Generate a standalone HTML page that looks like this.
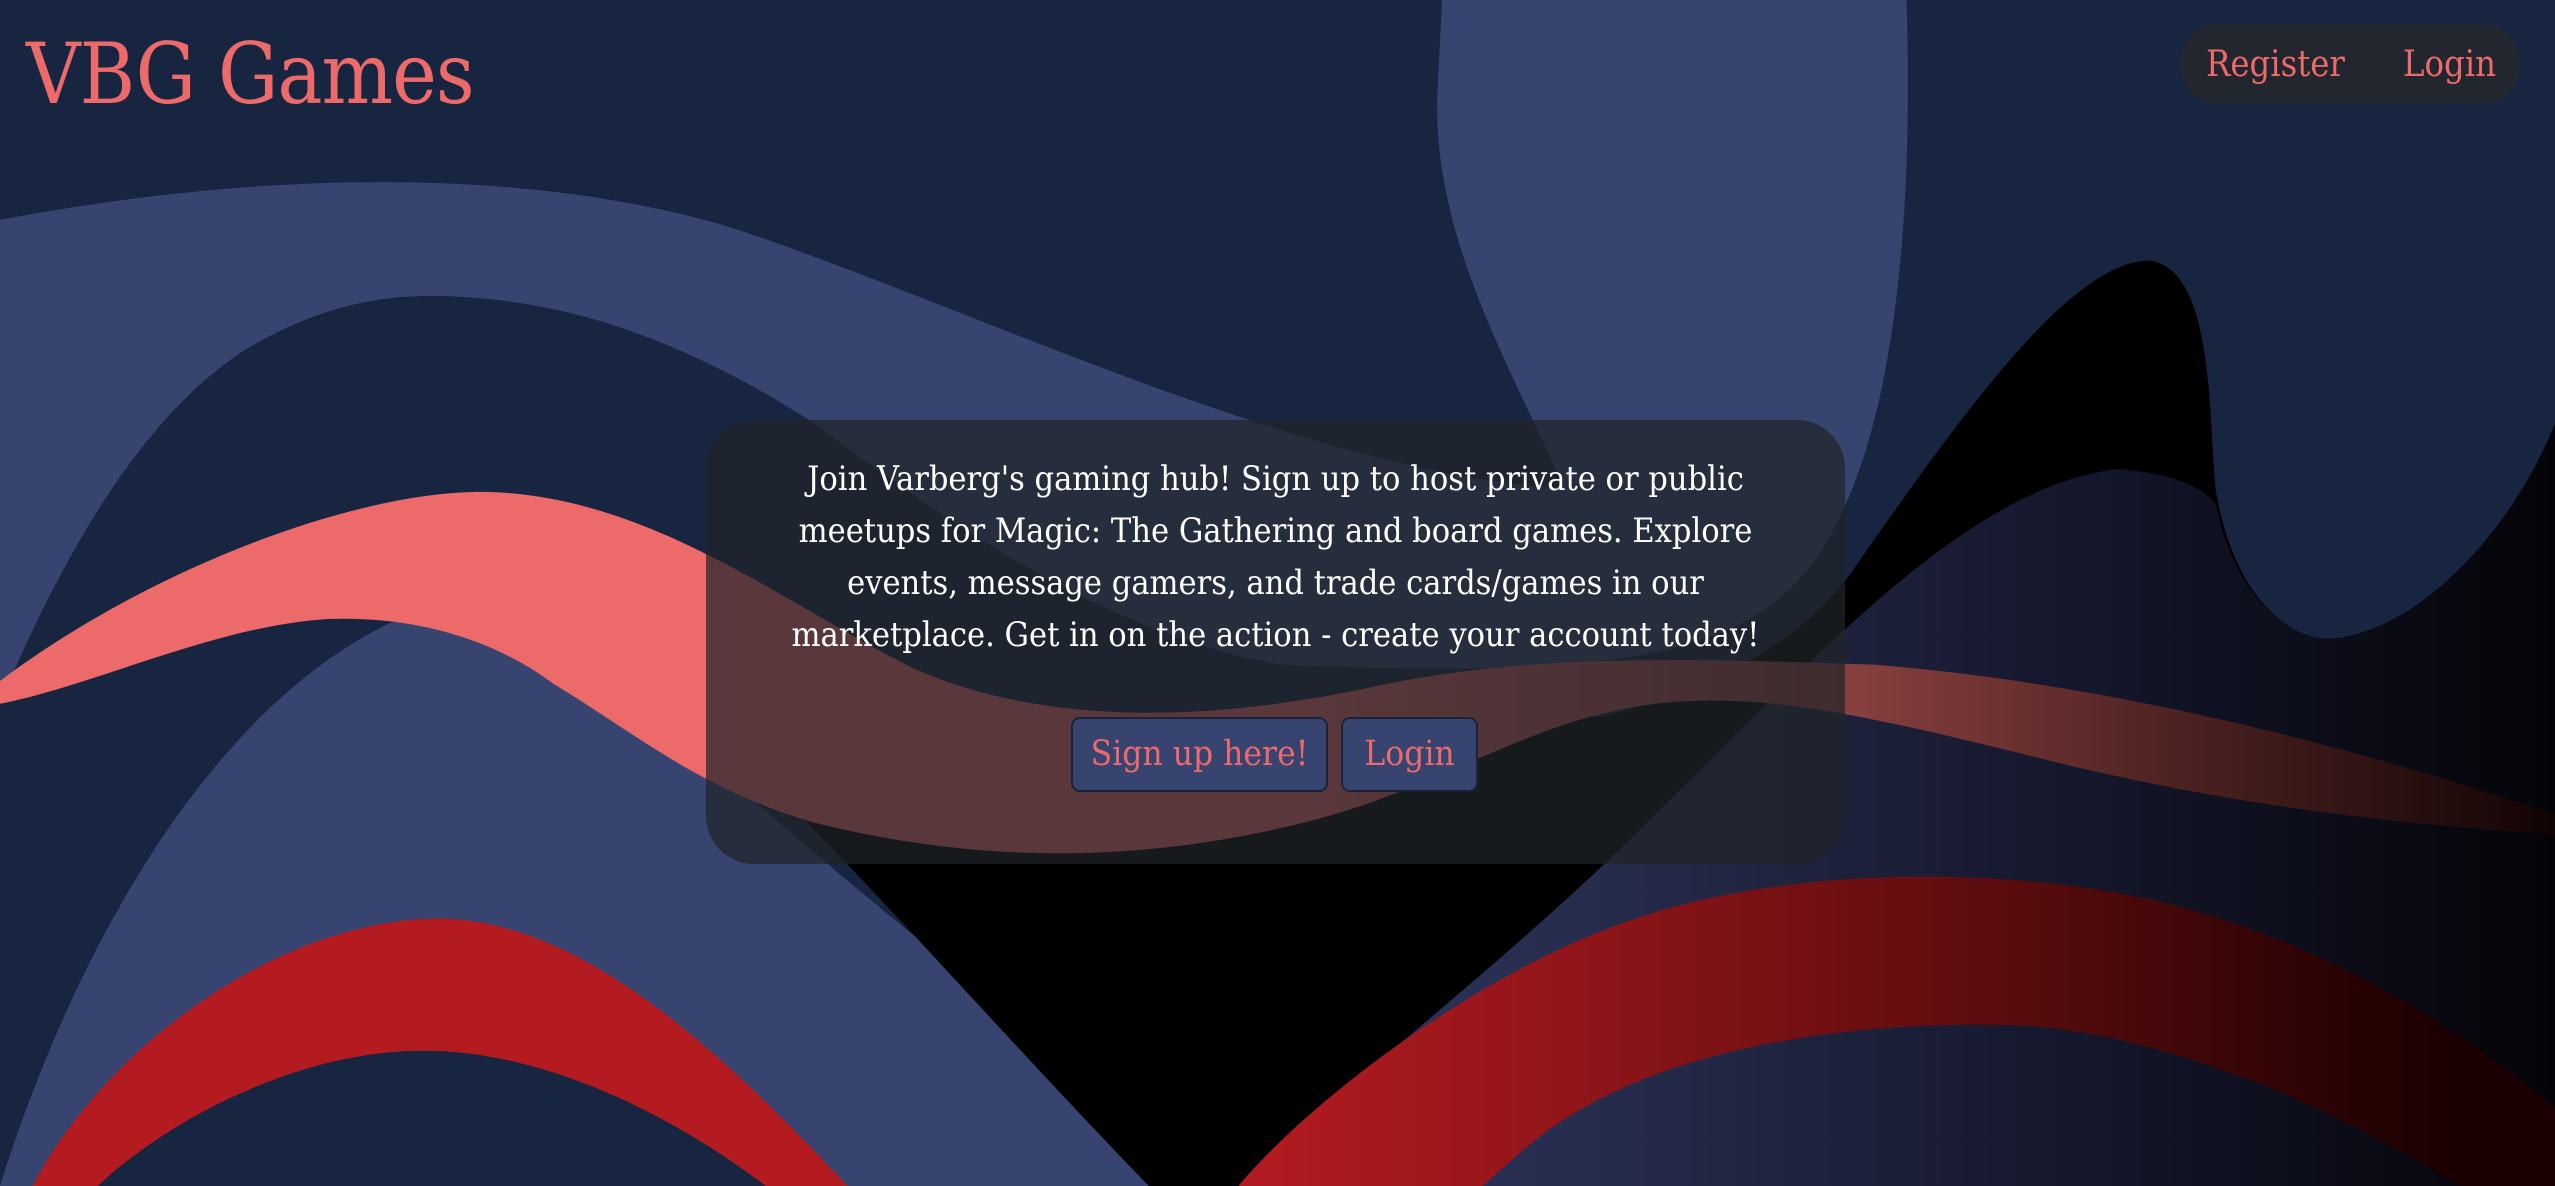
<!DOCTYPE html>
<html><head><meta charset="utf-8">
<style>
html,body{margin:0;padding:0;width:2555px;height:1186px;overflow:hidden;background:#172540;}
body{position:relative;font-family:"DejaVu Serif","Liberation Serif",serif;font-stretch:condensed;}
svg.bg{position:absolute;left:0;top:0;width:2555px;height:1186px;}
.title{position:absolute;left:26px;top:24px;font-size:84px;line-height:100px;color:#ec6a6a;white-space:nowrap;letter-spacing:-1px;}
.nav{position:absolute;left:2179px;top:24px;width:342px;height:80px;border-radius:40px;background:#22262f;}
.nav span{position:absolute;top:19px;font-size:36px;line-height:44px;color:#ec6a6a;white-space:nowrap;}
.card{position:absolute;left:706px;top:420px;width:1139px;height:444px;border-radius:48px;background:rgba(32,36,40,0.72);}
.txt{position:absolute;left:706px;width:1139px;top:453px;text-align:center;color:#fff;font-size:34px;line-height:52px;white-space:nowrap;}
.btn{position:absolute;top:717px;height:71px;background:#384470;border:2px solid #1c2238;border-radius:9px;color:#ec6a6a;font-size:35px;line-height:71px;text-align:center;white-space:nowrap;}
</style></head><body>
<svg class="bg" viewBox="0 0 1568 728" preserveAspectRatio="none" xmlns="http://www.w3.org/2000/svg">
<defs>
<linearGradient id="gR1" gradientUnits="userSpaceOnUse" x1="0" y1="0" x2="1568" y2="0">
<stop offset="0" stop-color="#ec6a6a"/><stop offset="0.52" stop-color="#ec6a6a"/><stop offset="0.72" stop-color="#8a4040"/><stop offset="0.86" stop-color="#4a2020"/><stop offset="1" stop-color="#120404"/></linearGradient>
<linearGradient id="gD2" gradientUnits="userSpaceOnUse" x1="0" y1="0" x2="1568" y2="0">
<stop offset="0.5" stop-color="#2b3560"/><stop offset="0.62" stop-color="#262c4c"/><stop offset="0.82" stop-color="#14162a"/><stop offset="1" stop-color="#040408"/></linearGradient>
<linearGradient id="gR2" gradientUnits="userSpaceOnUse" x1="0" y1="0" x2="1568" y2="0">
<stop offset="0.5" stop-color="#b01a20"/><stop offset="0.62" stop-color="#8e1519"/><stop offset="0.8" stop-color="#550b0d"/><stop offset="0.96" stop-color="#1a0000"/></linearGradient>
</defs>
<rect width="1568" height="728" fill="#172540"/>
<path fill="#384470" d="M0,135 C120,112 300,95 450,140 C600,190 800,290 960,300 C930,230 880,150 882,60 L885,0 L1170,0 C1175,150 1160,300 1100,360 C1050,410 950,415 786,408 L786,728 L0,728 Z"/>
<path fill="#172540" d="M0,432 C30,360 80,260 150,215 C200,185 240,180 280,182 C360,186 430,215 500,260 C580,320 680,390 786,408 L786,728 L0,728 Z"/>
<path fill="#384470" d="M0,728 C40,600 120,440 240,382 C320,370 380,420 431,464 C540,560 640,640 760,728 Z"/>
<path fill="#b31b20" d="M20,728 C60,650 160,570 260,564 C340,560 420,620 520,728 Z"/>
<path fill="#172540" d="M60,728 C100,690 180,645 260,645 C340,645 420,690 470,728 Z"/>
<path fill="#000" d="M470,440 L985,440 C1050,420 1100,400 1135,353 C1200,260 1270,160 1319,160 C1360,165 1355,260 1360,302 C1370,360 1400,392 1429,392 C1480,390 1540,330 1568,260 L1568,728 L705,728 C620,640 550,560 496,506 C485,480 475,460 470,440 Z"/>
<path fill="url(#gD2)" d="M760,728 C820,670 900,610 985,530 C1100,420 1200,300 1299,288 C1330,290 1352,298 1360,310 C1370,360 1400,392 1429,392 C1480,390 1540,330 1568,260 L1568,728 Z"/>
<path fill="url(#gR2)" d="M760,728 C800,680 900,600 1000,565 C1100,530 1250,530 1350,560 C1450,590 1520,640 1568,680 L1568,728 L1509,728 C1450,690 1350,640 1250,630 C1150,625 1050,640 985,673 C950,690 930,710 910,728 Z"/>
<path fill="url(#gR1)" d="M0,418 C90,350 220,300 300,302 C400,305 480,370 560,410 C650,450 760,440 850,420 C950,400 1050,405 1150,408 C1300,420 1450,460 1568,500 L1568,512 C1450,505 1350,490 1250,465 C1150,440 1100,430 1050,430 C950,430 900,480 800,505 C700,530 600,530 500,505 C430,485 390,450 340,420 C300,390 250,378 200,380 C130,385 60,420 0,432 Z"/>
</svg>
<div class="title">VBG Games</div>
<div class="nav"><span style="left:27px">Register</span><span style="left:224px">Login</span></div>
<div class="card"></div>
<div class="txt">Join Varberg's gaming hub! Sign up to host private or public<br>meetups for Magic: The Gathering and board games. Explore<br>events, message gamers, and trade cards/games in our<br>marketplace. Get in on the action - create your account today!</div>
<div class="btn" style="left:1071px;width:253px">Sign up here!</div>
<div class="btn" style="left:1341px;width:133px">Login</div>
</body></html>
